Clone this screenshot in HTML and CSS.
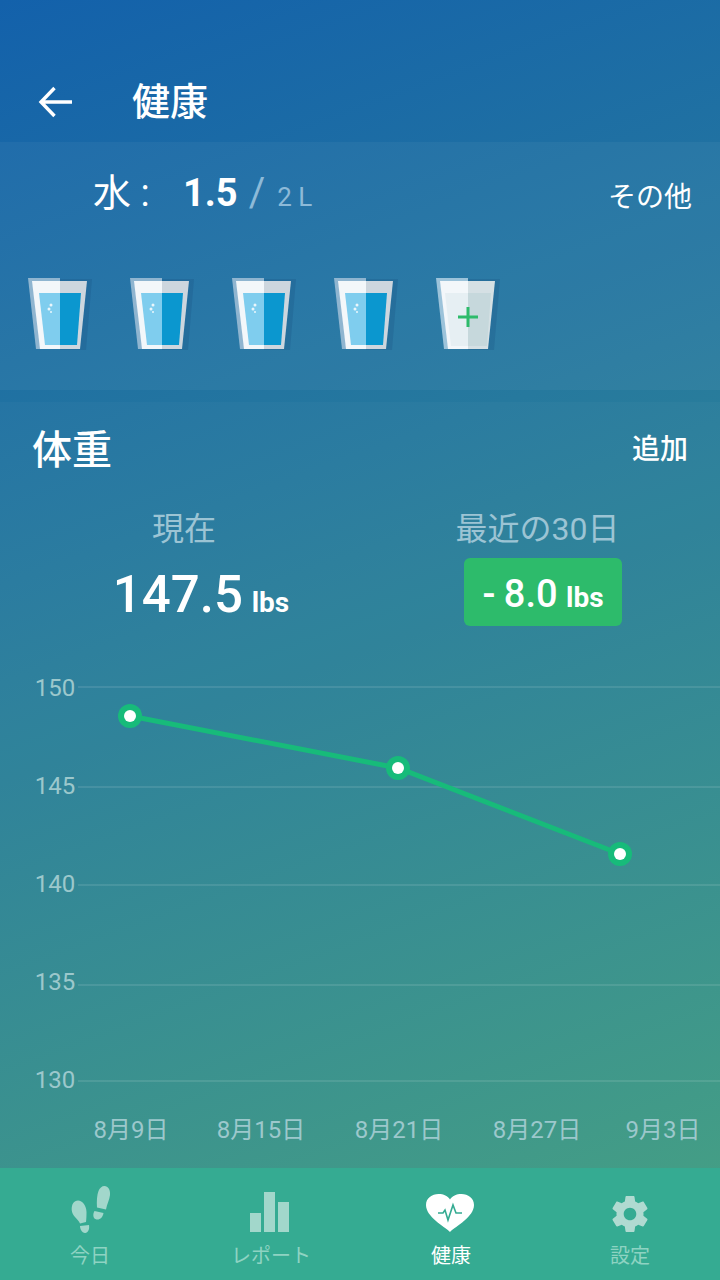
FILE: index.html
```html
<!DOCTYPE html>
<html lang="ja">
<head>
  <title>健康</title>
  <link rel="stylesheet" href="styles.css">
</head>
<body>
  <div class="screen">
    <header class="topbar">
      <svg class="back" width="36" height="36" viewBox="0 0 36 36"><path d="M34 18H4M16.500 4 3 18 16.500 32" fill="none" stroke="#fff" stroke-width="3.400"/></svg>
      <h1>健康</h1>
    </header>

    <section class="water">
      <div class="water-head">
        <div class="water-amount">
          <span class="water-label">水 :</span>
          <span class="water-value">1.5</span>
          <span class="water-slash">/</span>
          <span class="water-goal">2 L</span>
        </div>
        <a class="more">その他</a>
      </div>
      <div class="glasses">
        <svg class="glass" width="66" height="76" viewBox="0 0 66 76"><use href="#glass-full"/></svg>
        <svg class="glass" width="66" height="76" viewBox="0 0 66 76"><use href="#glass-full"/></svg>
        <svg class="glass" width="66" height="76" viewBox="0 0 66 76"><use href="#glass-full"/></svg>
        <svg class="glass" width="66" height="76" viewBox="0 0 66 76"><use href="#glass-full"/></svg>
        <svg class="glass" width="66" height="76" viewBox="0 0 66 76">
          <path d="M32 3H64L58 74H32Z" fill="#17507f" opacity=".25"/>
          <path d="M0 2H32V73H8Z" fill="#9cc3da"/>
          <path d="M4 5H32V73H12Z" fill="#f3f7fa"/>
          <path d="M32 5H59L52 73H32Z" fill="#d5e0e4"/>
          <path d="M9 17H32V70H15Z" fill="#e6eff3"/>
          <path d="M32 17H55L51 70H32Z" fill="#c6d8dc"/>
          <path d="M32 31V51M22 41H42" stroke="#2dbb6b" stroke-width="3"/>
        </svg>
      </div>
    </section>

    <section class="weight">
      <div class="weight-head">
        <h2>体重</h2>
        <a class="add">追加</a>
      </div>
      <div class="stats">
        <div class="stat stat-now">
          <div class="stat-title">現在</div>
          <div class="stat-value">147.5 <small>lbs</small></div>
        </div>
        <div class="stat stat-change">
          <div class="stat-title">最近の30日</div>
          <div class="change-badge">- 8.0 <small>lbs</small></div>
        </div>
      </div>
      <svg class="chart" width="720" height="504" viewBox="0 0 720 504">
        <path class="grid" d="M78 23H720M78 123H720M78 221H720M78 321H720M78 417H720"/>
        <g class="y-labels">
          <text x="55" y="32">150</text>
          <text x="55" y="130">145</text>
          <text x="55" y="228">140</text>
          <text x="55" y="326">135</text>
          <text x="55" y="424">130</text>
        </g>
        <path class="line" d="M130 52 398 104 620 190"/>
        <g class="point">
          <circle cx="130" cy="52" r="12"/><circle class="dot" cx="130" cy="52" r="6"/>
          <circle cx="398" cy="104" r="12"/><circle class="dot" cx="398" cy="104" r="6"/>
          <circle cx="620" cy="190" r="12"/><circle class="dot" cx="620" cy="190" r="6"/>
        </g>
        <g class="x-labels">
          <text x="131" y="474">8月9日</text>
          <text x="261" y="474">8月15日</text>
          <text x="399" y="474">8月21日</text>
          <text x="537" y="474">8月27日</text>
          <text x="663" y="474">9月3日</text>
        </g>
      </svg>
    </section>

    <nav class="tabs">
      <div class="tab">
        <svg width="44" height="50" viewBox="0 0 44 50">
          <path d="M10 16.500C14.500 16.500 18.500 22 18.500 28 18.500 31 18.500 34 18 38L12 39.500C10 35 4 32 3.700 26 3.500 20 6 16.500 10 16.500Z"/>
          <path d="M12 42 21 41C21.500 44 21 48 17.500 49 14 49.500 12 45 12 42Z"/>
          <path d="M36.500 2C40 2 42.500 5.500 42 11 41.500 16 39 20 38 25.500L29 23.500C28.500 17 29 11 30.500 7 31.500 4 34 2 36.500 2Z"/>
          <path d="M26.500 27 35.500 29C35 33 32 36 28.500 35.500 25 35 24.500 30 26.500 27Z"/>
        </svg>
        <span>今日</span>
      </div>
      <div class="tab">
        <svg width="44" height="50" viewBox="0 0 44 50"><path d="M1 29H12V48H1ZM15 8H26V48H15ZM29 18H40V48H29Z"/></svg>
        <span>レポート</span>
      </div>
      <div class="tab tab-active">
        <svg width="50" height="50" viewBox="0 0 50 50">
          <path d="M24 48C18 42 0 33 0 21 0 14 6 10 12.500 10 17.500 10 22 12 24 15.500 26 12 30.500 10 35.500 10 42 10 48 14 48 21 48 33 30 42 24 48Z"/>
          <path d="M12 29H17L19 26 22 36 27 21 30 29H36" fill="none" stroke="#35ab92" stroke-width="1.600"/>
        </svg>
        <span>健康</span>
      </div>
      <div class="tab tab-gear">
        <svg width="44" height="50" viewBox="0 0 44 50"><path transform="translate(22 30) scale(1.800) translate(-12 -12)" d="M19.430 12.980c.04-.32.07-.64.07-.98s-.03-.66-.07-.98l2.110-1.650c.19-.15.24-.42.12-.64l-2-3.460c-.12-.22-.39-.3-.61-.22l-2.490 1c-.52-.4-1.080-.73-1.690-.98l-.38-2.650C14.460 2.180 14.250 2 14 2h-4c-.25 0-.46.18-.49.42l-.38 2.650c-.61.25-1.170.59-1.690.98l-2.490-1c-.23-.09-.49 0-.61.22l-2 3.460c-.13.22-.07.49.12.64l2.110 1.650c-.04.32-.07.65-.07.98s.03.66.07.98l-2.110 1.650c-.19.15-.24.42-.12.64l2 3.460c.12.22.39.3.61.22l2.490-1c.52.4 1.080.73 1.690.98l.38 2.650c.03.24.24.42.49.42h4c.25 0 .46-.18.49-.42l.38-2.650c.61-.25 1.170-.59 1.690-.98l2.490 1c.23.09.49 0 .61-.22l2-3.460c.12-.22.07-.49-.12-.64l-2.110-1.650zM12 15.500c-1.930 0-3.500-1.570-3.500-3.500s1.570-3.500 3.500-3.500 3.500 1.570 3.500 3.500-1.570 3.500-3.500 3.500z"/></svg>
        <span>設定</span>
      </div>
    </nav>
  </div>

  <svg class="defs" width="0" height="0">
    <defs>
      <g id="glass-full">
        <path d="M32 3H64L58 74H32Z" fill="#17507f" opacity=".25"/>
        <path d="M0 2H32V73H8Z" fill="#8fb5d0"/>
        <path d="M4 5H32V73H12Z" fill="#f3f7fa"/>
        <path d="M32 5H59L52 73H32Z" fill="#cdd6de"/>
        <path d="M11 17H32V69H17Z" fill="#7fcdee"/>
        <path d="M32 17H53L49 69H32Z" fill="#0b97cf"/>
        <circle cx="23" cy="29" r="1.500" fill="#eaf6fb"/>
        <circle cx="21" cy="33" r="1.500" fill="#eaf6fb"/>
        <circle cx="23" cy="36" r="1" fill="#eaf6fb"/>
      </g>
    </defs>
  </svg>
</body>
</html>
```

FILE: styles.css
```css
* {
  box-sizing: border-box;
}

body {
  margin: 0;
  font-family: Roboto, "Noto Sans CJK JP", sans-serif;
  color: #fff;
}

.screen {
  width: 720px;
  height: 1280px;
  display: flex;
  flex-direction: column;
  background: linear-gradient(160deg, #1361ab 0%, #26799e 38%, #43a080 100%);
  overflow: hidden;
}

.defs {
  position: absolute;
}

/* top bar */
.topbar {
  height: 142px;
  padding: 82px 0 0 38px;
  display: flex;
  align-items: flex-start;
}

.back {
  margin-top: 2px;
}

.topbar h1 {
  margin: 0 0 0 58px;
  font-size: 38px;
  line-height: 40px;
  font-weight: 500;
}

/* water */
.water {
  height: 248px;
  background: rgba(255, 255, 255, 0.045);
}

.water-head {
  height: 134px;
  padding: 20px 28px 0 93px;
  display: flex;
  justify-content: space-between;
  align-items: flex-start;
}

.water-amount {
  display: flex;
  align-items: baseline;
  height: 52px;
}

.water-label {
  font-size: 38px;
  width: 90px;
}

.water-value {
  font-size: 38px;
  font-weight: 700;
}

.water-slash {
  font-size: 40px;
  font-weight: 400;
  color: #8dbad8;
  margin-left: 11px;
}

.water-goal {
  font-size: 26px;
  color: #8dbad8;
  margin-left: 12px;
}

.more {
  font-size: 28px;
  line-height: 72px;
}

.glasses {
  display: flex;
  gap: 36px;
  padding-left: 28px;
}

/* weight */
.weight {
  margin-top: 12px;
  height: 766px;
  background: rgba(255, 255, 255, 0.025);
}

.weight-head {
  height: 95px;
  padding: 20px 32px 0;
  display: flex;
  justify-content: space-between;
  align-items: flex-start;
}

.weight-head h2 {
  margin: 0;
  font-size: 40px;
  line-height: 58px;
  font-weight: 500;
}

.add {
  font-size: 28px;
  line-height: 56px;
  font-weight: 500;
}

.stats {
  display: flex;
  height: 153px;
}

.stat {
  display: flex;
  flex-direction: column;
  align-items: center;
}

.stat-now {
  width: 370px;
}

.stat-change {
  width: 346px;
}

.stat-title {
  margin-top: 2px;
  font-size: 32px;
  line-height: 60px;
  color: #9cc4d4;
}

.stat-now .stat-title {
  margin-right: 2px;
}

.stat-change .stat-title {
  margin-right: 11px;
}

.stat-value {
  margin-left: 32px;
  font-size: 51px;
  line-height: 72px;
  font-weight: 500;
  word-spacing: -4px;
  white-space: nowrap;
}

.stat-value small,
.change-badge small {
  font-size: 28px;
  font-weight: 700;
}

.change-badge {
  width: 158px;
  height: 68px;
  margin-top: -1px;
  border-radius: 6px;
  background: #2dbb6b;
  font-size: 38px;
  font-weight: 500;
  line-height: 72px;
  text-align: center;
  word-spacing: -1px;
  white-space: nowrap;
}

/* chart */
.chart {
  display: block;
  margin-top: 14px;
}

.grid {
  stroke: #fff;
  stroke-opacity: 0.1;
  stroke-width: 2;
  fill: none;
}

.chart text {
  font-size: 24px;
  fill: #9cc8cc;
}

.y-labels text {
  text-anchor: middle;
}

.x-labels text {
  text-anchor: middle;
}

.line {
  fill: none;
  stroke: #17bb7a;
  stroke-width: 5;
}

.point circle {
  fill: #17bb7a;
}

.point .dot {
  fill: #fff;
}

/* bottom tabs */
.tabs {
  height: 112px;
  background: #35ab92;
  display: grid;
  grid-template-columns: 180px 182px 178px 180px;
}

.tab {
  display: flex;
  flex-direction: column;
  align-items: center;
  padding-top: 16px;
  color: #8ed3c2;
  font-size: 20px;
}

.tab svg {
  height: 50px;
  fill: #a2d7cb;
}

.tab span {
  line-height: 30px;
  margin-top: 7px;
}

.tab-active {
  color: #fff;
}

.tab-active svg {
  fill: #fff;
}

.tab-gear svg {
  fill: #b0dad1;
}
```
